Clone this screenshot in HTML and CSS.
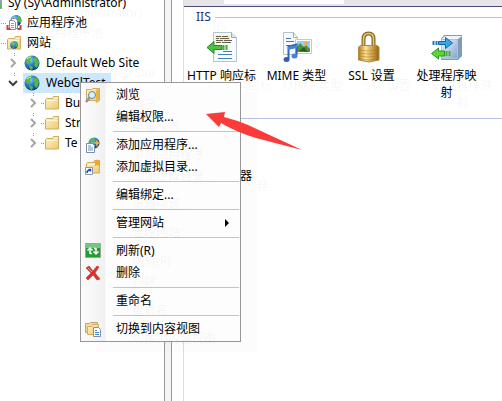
FILE: index.html
```html
<!DOCTYPE html>
<html lang="zh-CN">
<head>
    <meta charset="UTF-8">
    <meta name="viewport" content="width=device-width, initial-scale=1.0">
    <title>IIS</title>
    <link rel="stylesheet" href="styles.css">
</head>
<body>

<!-- Shared icons -->
<svg class="defs" width="0" height="0" aria-hidden="true">
    <defs>
        <linearGradient id="folderFill" x1="0" y1="0" x2="1" y2="1">
            <stop offset="0" stop-color="#fff3c4"/>
            <stop offset="1" stop-color="#edc976"/>
        </linearGradient>
        <radialGradient id="seaFill" cx=".35" cy=".3" r=".75">
            <stop offset="0" stop-color="#a5dcf8"/>
            <stop offset=".45" stop-color="#2c7fd0"/>
            <stop offset="1" stop-color="#0d3580"/>
        </radialGradient>
        <symbol id="folder" viewBox="0 0 16 16">
            <path d="M1.5 4.5l1-1h6l1-2h5v12.5h-13z" fill="url(#folderFill)" stroke="#d0ac62"/>
            <path d="M10 3h4M3 5.5h10" stroke="#fff6d0"/>
        </symbol>
        <symbol id="globe" viewBox="0 0 16 16">
            <circle cx="8" cy="8" r="7.5" fill="url(#seaFill)"/>
            <path d="M2 4Q5 .5 8 1L8 3 6 5 7 7 4 9 2 7zM10 2l3 1 2 4-1 4-2 2-2-3 1-2-2-3zM5 10l4 2-1 3-2-1z" fill="#55b848"/>
            <path d="M3 4q2-2 4-2" stroke="#d8f5c0" fill="none"/>
        </symbol>
        <symbol id="chevron" viewBox="0 0 16 16">
            <path d="M6 4l4 4-4 4" fill="none" stroke="#a6a6a6" stroke-width="2"/>
        </symbol>
        <symbol id="page" viewBox="0 0 16 16">
            <path d="M1.500 6.500h6l2 2v7h-8z" fill="#fff" stroke="#7d8fa6"/>
            <path d="M3 9h3M3 11h5M3 13h5" stroke="#6a8fbd"/>
        </symbol>
    </defs>
</svg>

<div class="window">
    <nav class="tree-pane">
        <ul class="tree">
            <li class="node root">
                <svg class="icon" viewBox="0 0 16 16"><path d="M3 1h12v13H3z" fill="#8aa7b8"/><path d="M9 8h5v5H9z" fill="#5fb94c"/></svg>
                <span>Sy (Sy\Administrator)</span>
            </li>
            <li class="node">
                <svg class="icon" viewBox="0 0 16 16">
                    <circle cx="10" cy="5.500" r="5.500" fill="url(#seaFill)"/>
                    <path d="M11 0l4 3v5l-4-2z" fill="#55b848"/>
                    <path d="M5.500 3.500h4l2 2v8h-6z" fill="#fff" stroke="#8090a5"/>
                    <path d="M3.500 5.500h4l2 2v7h-6z" fill="#fff" stroke="#8090a5"/>
                    <path d="M5 8.500h3M5 10.500h3M5 12.500h3" stroke="#8da5c2"/>
                    <path d="M1.500 10v4h3M14.500 10v4h-3" fill="none" stroke="#c8453e" stroke-width="2"/>
                </svg>
                <span>应用程序池</span>
            </li>
            <li class="node">
                <svg class="icon" viewBox="0 0 16 16"><use href="#folder"/><use href="#globe" x="4" y="6" width="8" height="8"/></svg>
                <span>网站</span>
            </li>
            <li class="node site">
                <svg class="chevron"><use href="#chevron"/></svg>
                <div class="caption"><svg class="icon"><use href="#globe"/></svg><span>Default Web Site</span></div>
            </li>
            <li class="node site selected">
                <svg class="chevron" viewBox="0 0 16 16"><path d="M4 6l4 4 4-4" fill="none" stroke="#404040" stroke-width="2"/></svg>
                <div class="caption"><svg class="icon"><use href="#globe"/></svg><span>WebGlTest</span></div>
            </li>
            <li class="node dir">
                <svg class="chevron"><use href="#chevron"/></svg>
                <div class="caption"><svg class="icon"><use href="#folder"/></svg><span>Bu</span></div>
            </li>
            <li class="node dir">
                <svg class="chevron"><use href="#chevron"/></svg>
                <div class="caption"><svg class="icon"><use href="#folder"/></svg><span>Str</span></div>
            </li>
            <li class="node dir">
                <svg class="chevron"><use href="#chevron"/></svg>
                <div class="caption"><svg class="icon"><use href="#folder"/></svg><span>Te</span></div>
            </li>
        </ul>
    </nav>
    <div class="splitter"></div>
    <main class="features">
        <div class="toolbar"><div class="filter"></div></div>
        <section class="group">
            <h2>IIS</h2>
            <div class="items">
                <div class="item">
                    <svg viewBox="0 0 32 32">
                        <path d="M7.500 1.500h18l5 5v24h-23z" fill="#f8fbfd" stroke="#b5c3cd"/>
                        <path d="M25.500 1.500v5h5" fill="#dfe7ec" stroke="#9eabb4"/>
                        <path d="M9 4h15v8H9z" fill="#fff2a0"/>
                        <path d="M10 5.500h5m1 0h6M10 7.500h3m1 0h9M10 9.500h7m1 0h8M10 11.500h5m1 0h9" stroke="#67634a"/>
                        <path d="M1 16.500l7-6v4h8v4H8v4z" fill="#4dc13c" stroke="#23892a"/>
                        <path d="M17.500 14v5M20.500 14v5" stroke="#3ead35" stroke-width="2"/>
                        <path d="M17 20.500h9M12 23.500h14M12 27.500h14" stroke="#417fb5"/>
                    </svg>
                    <span>HTTP 响应标</span>
                </div>
                <div class="item">
                    <svg viewBox="0 0 32 32">
                        <path d="M2.500 1.500h10l4 5v17h-14z" fill="#f8fbfd" stroke="#b5c3cd"/>
                        <path d="M12.500 1.500v5h4" fill="none" stroke="#9eabb4"/>
                        <path d="M5 7.500h5M5 10.500h8M5 14.500h5" stroke="#417fb5"/>
                        <path d="M14.500 8.500h16v14h-16z" fill="#fff" stroke="#c3c9ce"/>
                        <path d="M16 10h13v11H16z" fill="#8ed0ff"/>
                        <path d="M16 21v-5l3-4 4 4 2-2 4 4v3z" fill="#50942f"/>
                        <path d="M18 20l5-4 4 5z" fill="#28611e"/>
                        <circle cx="25" cy="12.500" r="2" fill="#fda742"/>
                        <path d="M7.500 28V15.500l8-2V24" fill="none" stroke="#3264b8" stroke-width="2"/>
                        <path d="M7 16l9-2v3l-9 2z" fill="#4b83d7"/>
                        <ellipse cx="5.500" cy="28.500" rx="3" ry="2.500" fill="#315eb0"/>
                        <ellipse cx="13.500" cy="25" rx="3" ry="2.500" fill="#4b83d7"/>
                    </svg>
                    <span>MIME 类型</span>
                </div>
                <div class="item">
                    <svg viewBox="0 0 32 32">
                        <defs>
                            <linearGradient id="brass">
                                <stop offset="0" stop-color="#b37b22"/>
                                <stop offset=".35" stop-color="#ffe391"/>
                                <stop offset="1" stop-color="#98600d"/>
                            </linearGradient>
                        </defs>
                        <path d="M7.500 17V8q0-5.500 5-5.500T17.500 8v9" fill="none" stroke="#8b6a24" stroke-width="4"/>
                        <path d="M7.500 17V8q0-5.500 5-5.500T17.500 8v9" fill="none" stroke="#e3c66e" stroke-width="1.500"/>
                        <path d="M2.500 16l2-1.500h16.500l2 1.500v13l-10 2-10.500-2z" fill="url(#brass)" stroke="#b08a42"/>
                        <path d="M3 19l9 1 11-1M3 22l9 1 11-1M3 25l9 1 11-1M3 28l9 1 11-1" fill="none" stroke="#a77720" stroke-opacity=".5"/>
                    </svg>
                    <span>SSL 设置</span>
                </div>
                <div class="item">
                    <svg viewBox="0 0 32 32">
                        <defs>
                            <linearGradient id="steel" x2="1" y2="1">
                                <stop offset="0" stop-color="#eef6ff"/>
                                <stop offset="1" stop-color="#86a5c8"/>
                            </linearGradient>
                        </defs>
                        <path d="M10 8l3-4h18v21l-4 4H10z" fill="#7d9bbb"/>
                        <path d="M11 8l3-3h17l-4 3z" fill="#edf6fd"/>
                        <path d="M10.500 8.500h16v19h-16z" fill="url(#steel)" stroke="#a9c3dc"/>
                        <path d="M2.500 10v4M5.500 10v4" stroke="#277abf" stroke-width="2"/>
                        <path d="M7.500 10.500h7v-4l7 5.500-7 5.500v-4h-7z" fill="#35a5ee" stroke="#1765a5"/>
                        <path d="M.5 22.500l7-5.500v3h6v5h-6v3z" fill="#61d538" stroke="#279522"/>
                        <path d="M15.500 20v5M18.500 20v5" stroke="#42b52b" stroke-width="2"/>
                    </svg>
                    <span>处理程序映射</span>
                </div>
            </div>
        </section>
        <section class="group-next"><span>器</span></section>
    </main>
</div>

<div class="menu" role="menu">
    <button class="entry" role="menuitem">
        <svg class="icon" viewBox="0 0 16 16">
            <path d="M1.500 2.500h5l1-1h7v12l-3 2-1-2h-9z" fill="url(#folderFill)" stroke="#d0ac62"/>
            <path d="M11 3l3-1v11l-3 2z" fill="#e3b748"/>
            <path d="M5 10l-4 5" stroke="#8795a5" stroke-width="2.500"/>
            <circle cx="7" cy="8" r="3.500" fill="#d8eeff" stroke="#69879f"/>
        </svg>
        <span>浏览</span>
    </button>
    <button class="entry" role="menuitem"><span>编辑权限...</span></button>
    <hr>
    <button class="entry" role="menuitem">
        <svg class="icon" viewBox="0 0 16 16">
            <circle cx="9" cy="6" r="5.500" fill="url(#seaFill)"/>
            <path d="M5 2l5-1-1 4-4 1z" fill="#55b848"/>
            <use href="#page"/>
            <path d="M12 2l1 3 3 1-3 1-1 4-1-4-3-1 3-1z" fill="#ffad32"/>
        </svg>
        <span>添加应用程序...</span>
    </button>
    <button class="entry" role="menuitem">
        <svg class="icon" viewBox="0 0 16 16">
            <use href="#folder"/>
            <path d="M12 0l1 2 3 1-2 1 1 3-3-1-2 1 0-3-2-1 3-1z" fill="#f6a12b"/>
            <path d="M.5 8.500h7v7h-7z" fill="#fff" stroke="#8999b0"/>
            <path d="M2 14q0-3 3-3M3.500 10.500h2v2" fill="none" stroke="#1b4db0" stroke-width="1.500"/>
        </svg>
        <span>添加虚拟目录...</span>
    </button>
    <hr>
    <button class="entry" role="menuitem"><span>编辑绑定...</span></button>
    <hr>
    <button class="entry" role="menuitem">
        <span>管理网站</span>
        <svg class="submenu" viewBox="0 0 4 8"><path d="M0 0l4 4-4 4z"/></svg>
    </button>
    <hr>
    <button class="entry" role="menuitem">
        <svg class="icon" viewBox="0 0 16 16">
            <path d="M.5 .5h15v14H.5z" fill="#259b36" stroke="#8fae92"/>
            <path d="M1 1h14v4H1z" fill="#76c77e"/>
            <path d="M5 11V6M2.500 7.500L5 5l2.500 2.500M5 10.500h2M11 5v5M8.500 8.500L11 11l2.500-2.500M9 5.500h2" fill="none" stroke="#fff" stroke-width="1.500"/>
        </svg>
        <span>刷新(R)</span>
    </button>
    <button class="entry" role="menuitem">
        <svg class="icon" viewBox="0 0 16 16">
            <path d="M1 3l3-2 4 5 4-5 2 1-4 6 5 6-3 1-4-5-5 5-2-2 5-5z" fill="#df3029" stroke="#a94a48" stroke-width=".7"/>
            <path d="M3 3l4 4" stroke="#ff9b92"/>
        </svg>
        <span>删除</span>
    </button>
    <hr>
    <button class="entry" role="menuitem"><span>重命名</span></button>
    <hr>
    <button class="entry" role="menuitem">
        <svg class="icon" viewBox="0 0 16 16">
            <path d="M.5 2.500h4l1-1h7v10H.5z" fill="#f2dc99" stroke="#b8a477"/>
            <path d="M2.500 5.500h4l1-2h6v10h-11z" fill="url(#folderFill)" stroke="#d0ac62"/>
            <path d="M8.500 6.500h5l2 2v7h-7z" fill="#fff" stroke="#7d8fa6"/>
            <path d="M10 9.500h2M10 11.500h4M10 13.500h4" stroke="#417fc5"/>
        </svg>
        <span>切换到内容视图</span>
    </button>
</div>

<svg class="pointer" viewBox="0 0 96 44" aria-hidden="true">
    <path d="M0 6L19 4 18 9Q30 12 42 17L96 42 50 30Q30 24 15 15L13 19z" fill="#fb3a3a"/>
</svg>

</body>
</html>
```
FILE: styles.css
```css
* {
    box-sizing: border-box;
}
body {
    margin: 0;
    background: #fff;
    color: #000;
    font-family: "Noto Sans", "Noto Sans CJK SC", sans-serif;
    font-size: 12px;
    line-height: 20px;
    /* faint echo behind every label */
    text-shadow: 16px 10px 0 rgba(0, 0, 0, 0.05);
    overflow: hidden;
}
.defs {
    position: absolute;
}
.window {
    display: flex;
    height: 100vh;
    overflow: hidden;
}

/* Connections tree */
.tree-pane {
    flex: 0 0 164px;
    overflow: hidden;
}
.tree {
    list-style: none;
    margin: -7px 0 0;
    padding: 0;
}
.node {
    display: flex;
    align-items: center;
    height: 20px;
    padding-left: 6px;
    gap: 5px;
    white-space: nowrap;
    background: repeating-linear-gradient(to right, #999 0 1px, transparent 1px 2px) 1px 10px / 5px 1px no-repeat;
}
.node.root {
    padding-left: 0;
    margin-left: -13px;
    background: none;
}
.node.site {
    padding-left: 5px;
    gap: 2px;
    background: repeating-linear-gradient(to bottom, #999 0 1px, transparent 1px 2px) 14px 0 / 1px 3px no-repeat;
}
.node.dir {
    padding-left: 25px;
    gap: 2px;
    background:
        repeating-linear-gradient(to bottom, #999 0 1px, transparent 1px 2px) 33px 0 / 1px 3px no-repeat,
        repeating-linear-gradient(to right, #999 0 1px, transparent 1px 2px) 41px 10px / 3px 1px no-repeat;
}
.icon,
.chevron {
    flex: none;
    width: 16px;
    height: 16px;
}
.caption {
    display: flex;
    align-items: center;
    gap: 6px;
    height: 20px;
    padding: 0 5px 0 1px;
}
.dir .caption {
    gap: 5px;
}
.selected .caption {
    background: #cce8ff;
}
.splitter {
    flex: 0 0 8px;
    background: #f5f5f5;
    border: solid #999;
    border-width: 0 1px;
}

/* Feature view */
.features {
    flex: 1;
    min-width: 0;
    margin-left: 11px;
    border-left: 1px solid #ddd;
}
.toolbar {
    height: 7px;
    background: #e7e5e7;
    border-bottom: 1px solid #4a4c78;
}
.filter {
    width: 120px;
    height: 4px;
    margin-left: 40px;
    background: #fff;
}
.group {
    height: 112px;
    border-bottom: 1px solid #b4c3e4;
}
.group h2 {
    display: flex;
    align-items: center;
    gap: 4px;
    margin: 0;
    padding-left: 12px;
    color: #1e3287;
    font-size: 12px;
    font-weight: normal;
}
.group h2::after {
    content: "";
    flex: 1;
    height: 1px;
    background: #b4c3e4;
}
.items {
    display: flex;
    padding-top: 4px;
}
.item {
    display: flex;
    flex-direction: column;
    align-items: center;
    gap: 4px;
    width: 75px;
    line-height: 17px;
    text-align: center;
}
.item svg {
    width: 32px;
    height: 32px;
}
.item span {
    max-width: 71px;
}
.group-next {
    padding: 47px 0 0 56px;
}

/* Context menu */
.menu {
    position: absolute;
    left: 80px;
    top: 82px;
    width: 161px;
    padding: 1px 0;
    border: 1px solid #979797;
    background: linear-gradient(to right, #fcfcfc, #f0f0f0 24px, #fdfdfd 25px);
    box-shadow: 16px 10px 0 rgba(0, 0, 0, 0.01);
}
.entry {
    display: flex;
    align-items: center;
    width: 100%;
    height: 22px;
    padding: 0 11px 0 4px;
    border: 0;
    background: none;
    color: inherit;
    font: inherit;
    text-align: left;
    text-shadow: inherit;
}
.entry span {
    margin-left: 31px;
}
.entry .icon + span {
    margin-left: 15px;
}
.entry:hover {
    background: rgba(204, 232, 255, 0.5);
}
.submenu {
    width: 4px;
    height: 8px;
    margin-left: auto;
}
.menu hr {
    height: 1px;
    margin: 3px 1px 2px 32px;
    border: 0;
    background: #c5c5bb;
}

/* Red arrow pointing at the permissions entry */
.pointer {
    position: absolute;
    left: 206px;
    top: 108px;
    width: 96px;
    height: 44px;
}
```
